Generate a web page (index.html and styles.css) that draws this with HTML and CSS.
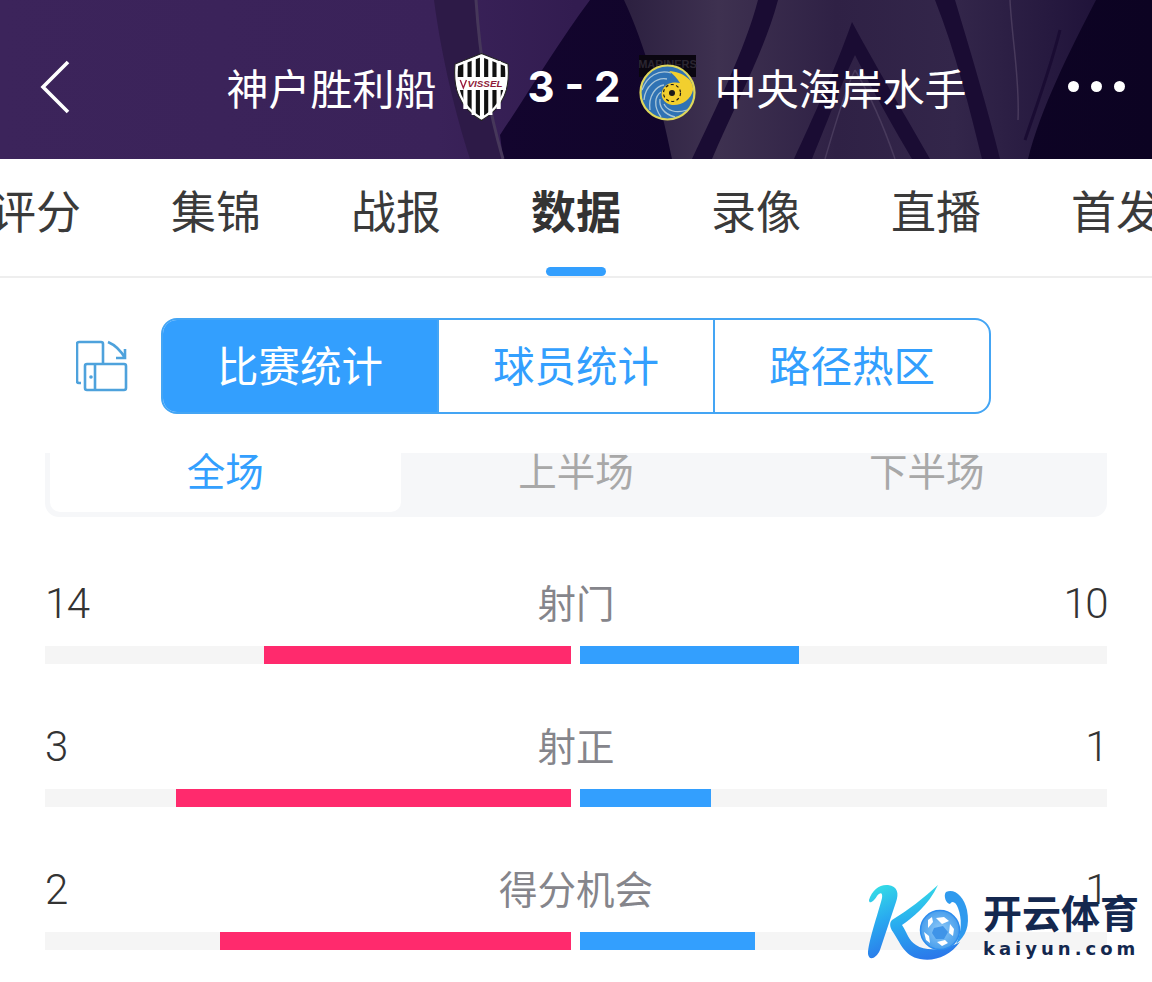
FILE: index.html
```html
<!DOCTYPE html>
<html lang="zh-CN">
<head>
<meta charset="utf-8">
<title>神户胜利船 3-2 中央海岸水手</title>
<link rel="stylesheet" href="styles.css">
</head>
<body>
<div class="page">
  <header class="match-header">
    <svg class="header-art" viewBox="0 0 1152 159" preserveAspectRatio="none" aria-hidden="true">
      <defs>
        <linearGradient id="base" x1="0" y1="0" x2="1" y2="0">
          <stop offset="0" stop-color="#3c245b"/><stop offset=".38" stop-color="#3a2259"/><stop offset=".5" stop-color="#321c50"/>
        </linearGradient>
        <linearGradient id="dark" x1="0" y1="0" x2="1" y2="0">
          <stop offset="0" stop-color="#13052e"/><stop offset="1" stop-color="#0c0322"/>
        </linearGradient>
        <linearGradient id="drape" x1="0" y1="0" x2="1" y2="0">
          <stop offset="0" stop-color="#2c2040"/><stop offset=".2" stop-color="#3e3150"/><stop offset=".45" stop-color="#2f2145"/><stop offset=".7" stop-color="#33264a"/><stop offset="1" stop-color="#20133a"/>
        </linearGradient>
      </defs>
      <rect width="1152" height="159" fill="url(#base)"/>
      <path d="M500 135C530 90 560 40 590 0H1152V159H503Z" fill="url(#dark)"/>
      <path d="M434 0C442 60 456 115 470 159H503C490 110 480 60 476 0Z" fill="#2d1a47"/>
      <path d="M476 0C480 60 490 115 503 159" stroke="#46375a" stroke-width="3" fill="none"/>
      <path d="M624 0H1096C1070 50 1040 110 1028 159H672C660 100 645 45 624 0Z" fill="url(#drape)"/>
      <path d="M758 0C745 50 715 110 692 159H712C735 105 765 50 778 0Z" fill="#1a0c33"/>
      <path d="M852 22C835 70 812 120 794 159H812C830 115 845 75 855 55C875 95 895 130 912 159H930C905 115 875 65 852 22Z" fill="#1a0c33"/>
      <path d="M935 0C955 50 970 110 982 159H1000C988 110 970 50 955 0Z" fill="#1a0c33"/>
      <path d="M855 70C845 90 835 125 825 159M855 70C870 95 885 130 895 159" stroke="#483a5c" stroke-width="1.500" fill="none"/>
      <path d="M1060 30C1050 70 1035 110 1025 140" stroke="#1a0c33" stroke-width="3" fill="none"/>
      <path d="M1010 0C1012 40 1020 80 1018 120" stroke="#483a5c" stroke-width="1.500" fill="none"/>
    </svg>
    <svg class="back-icon" viewBox="0 0 32 56" aria-label="返回"><path d="M29 3L4 28l25 25" fill="none" stroke="#fff" stroke-width="3.6"/></svg>
    <div class="match-title">
      <span class="team-name">神户胜利船</span>
      <svg class="crest crest-home" viewBox="1 0 53 68" preserveAspectRatio="none" aria-hidden="true">
        <path d="M27.500 .5L53 11C55 34 50 54 27.500 67.500C5 54 0 34 2 11Z" fill="#fff" stroke="#222" stroke-width="1"/>
        <path d="M27.500 4L50 13C52 34 47 52 27.500 64C8 52 3 34 5 13Z" fill="#111"/>
        <g fill="#fff"><rect x="10" y="8" width="4" height="48"/><rect x="18" y="6" width="4" height="56"/><rect x="26" y="4" width="4" height="60"/><rect x="34" y="6" width="4" height="56"/><rect x="42" y="8" width="4" height="48"/></g>
        <rect x="4" y="24" width="47" height="13" fill="#fff"/>
        <path d="M7 27l3 8 3-8" fill="none" stroke="#9c1b3c" stroke-width="1.300"/>
        <text class="crest-home-text" x="14" y="34.500">VISSEL</text>
      </svg>
      <span class="score">3 - 2</span>
      <svg class="crest crest-away" viewBox="0 0 58 70" aria-hidden="true">
        <rect x="0" y="1" width="57" height="22" fill="#0a0610"/>
        <text class="crest-away-text" x="28.500" y="14">MARINERS</text>
        <circle cx="28.500" cy="38.500" r="27" fill="#2f72b4" stroke="#dfd75a" stroke-width="2.200"/>
        <g fill="none" stroke="#a9c6d8" stroke-width="1.300">
          <path d="M3 36C8 22 20 15 32 19"/><path d="M5 46C6 32 18 23 28 25"/><path d="M11 56C9 42 17 32 25 31"/><path d="M22 63C14 52 16 42 22 38"/><path d="M36 63C24 60 20 52 21 45"/><path d="M48 56C36 60 28 56 25 50"/>
        </g>
        <path d="M30 17C44 18 55 26 54 36C52 46 42 52 33 51C25 50 20 42 24 35C28 28 36 28 41 29C38 24 34 20 30 17Z" fill="#f2cf2e"/>
        <circle cx="33" cy="39" r="8.500" fill="#f2cf2e" stroke="#1a1a1a" stroke-width="1.200" stroke-dasharray="3 2.500"/>
        <circle cx="33" cy="39" r="3" fill="#1a1a1a"/>
      </svg>
      <span class="team-name">中央海岸水手</span>
    </div>
    <div class="more-icon" aria-label="更多"><i></i><i></i><i></i></div>
  </header>

  <nav class="tabs">
    <span class="tab">评分</span>
    <span class="tab">集锦</span>
    <span class="tab">战报</span>
    <span class="tab tab-active">数据</span>
    <span class="tab">录像</span>
    <span class="tab">直播</span>
    <span class="tab">首发</span>
  </nav>

  <section class="switcher">
    <svg class="rotate-icon" viewBox="0 0 52 52" aria-hidden="true">
      <path d="M5 43H3a2 2 0 0 1-2-2V4a2 2 0 0 1 2-2h22a2 2 0 0 1 2 2v19" fill="none" stroke="#4ea2dc" stroke-width="2.600"/>
      <rect x="9" y="24" width="41" height="26" rx="2" fill="none" stroke="#4ea2dc" stroke-width="2.600"/>
      <path d="M19 24v26" stroke="#4ea2dc" stroke-width="2.600"/>
      <circle cx="15" cy="37" r="1.800" fill="#4ea2dc"/>
      <path d="M32 2c7 3 13 9 17 16M49 9v9h-9" fill="none" stroke="#4ea2dc" stroke-width="2.600"/>
    </svg>
    <div class="segments">
      <span class="segment segment-active">比赛统计</span>
      <span class="segment">球员统计</span>
      <span class="segment">路径热区</span>
    </div>
  </section>

  <div class="period-tabs">
    <span class="period period-active">全场</span>
    <span class="period">上半场</span>
    <span class="period">下半场</span>
  </div>

  <section class="stats">
    <div class="stat">
      <div class="stat-head"><span class="stat-num">14</span><span class="stat-label">射门</span><span class="stat-num">10</span></div>
      <div class="bars">
        <div class="track track-left"><div class="fill fill-home" style="width:58.33%"></div></div>
        <div class="track"><div class="fill fill-away" style="width:41.6%"></div></div>
      </div>
    </div>
    <div class="stat">
      <div class="stat-head"><span class="stat-num">3</span><span class="stat-label">射正</span><span class="stat-num">1</span></div>
      <div class="bars">
        <div class="track track-left"><div class="fill fill-home" style="width:75.1%"></div></div>
        <div class="track"><div class="fill fill-away" style="width:24.9%"></div></div>
      </div>
    </div>
    <div class="stat">
      <div class="stat-head"><span class="stat-num">2</span><span class="stat-label">得分机会</span><span class="stat-num">1</span></div>
      <div class="bars">
        <div class="track track-left"><div class="fill fill-home" style="width:66.67%"></div></div>
        <div class="track"><div class="fill fill-away" style="width:33.2%"></div></div>
      </div>
    </div>
  </section>

  <div class="watermark">
    <svg class="wm-logo" viewBox="0 0 104 80" aria-hidden="true">
      <defs>
        <linearGradient id="kgrad" x1="0.300" y1="0" x2="0.500" y2="1">
          <stop offset="0" stop-color="#35dfe6"/><stop offset=".5" stop-color="#29a9f0"/><stop offset="1" stop-color="#2b78ea"/>
        </linearGradient>
        <radialGradient id="ballgrad"><stop offset="0" stop-color="#8fcaf8"/><stop offset="1" stop-color="#4a9fec"/></radialGradient>
      </defs>
      <path d="M3 18C6 8 14 2 22 3C32 4 33 12 30 20L14 68C10 77 3 79 2 72C2 60 12 32 16 16C17 10 14 10 11 14C8 19 3 23 3 18Z" fill="url(#kgrad)"/>
      <path d="M72 3C62 24 46 36 36 43C42 52 42 58 50 63C60 70 80 68 94 60C84 74 68 80 54 77C38 74 34 60 27 50C24 46 23 41 26 38C42 28 58 16 72 3Z" fill="url(#kgrad)"/>
      <path d="M80 10C88 6 98 14 101 28C104 44 100 54 90 62C96 50 96 36 92 26C90 20 86 18 84 22C80 22 77 13 80 10Z" fill="#2f9aee"/>
      <circle cx="74" cy="48" r="19.500" fill="url(#ballgrad)" stroke="#2c8cee" stroke-width="1.500"/>
      <g fill="#fff">
        <path d="M70 36l8-1 5 4-7 3ZM62 38l4-3 1 5-5 6ZM58 50l5 4 1 7-4-3ZM84 42l4 5-1 7-4-3ZM71 60l8-2 3 3-6 3Z"/>
      </g>
      <path d="M68 46l9-2 5 6-4 7h-8l-4-6Z" fill="#3f94e8"/>
    </svg>
    <div class="wm-text">
      <div class="wm-cn">开云体育</div>
      <div class="wm-en">kaiyun.com</div>
    </div>
  </div>
</div>
</body>
</html>
```

FILE: styles.css
```css
* { box-sizing: border-box; }
html, body { margin: 0; padding: 0; background: #fff; }
body { font-family: "Noto Sans CJK SC", "Noto Sans", sans-serif; }
.page { position: relative; width: 1152px; height: 982px; overflow: hidden; background: #fff; }

.match-header {
  position: relative;
  height: 159px;
  display: flex;
  align-items: center;
  padding: 14px 27px 0 39px;
  background: #3b2359;
  color: #fff;
  overflow: hidden;
}
.header-art { position: absolute; inset: 0; width: 100%; height: 100%; }
.back-icon { position: relative; width: 32px; height: 56px; flex: none; }
.match-title {
  position: relative;
  flex: 1;
  display: flex;
  align-items: center;
  justify-content: center;
  margin-left: 54px;
}
.team-name { font-size: 42px; line-height: 56px; font-weight: 400; white-space: nowrap; }
.crest { display: block; flex: none; }
.crest-home { width: 55px; height: 68px; margin: 0 18px; }
.crest-away { width: 58px; height: 70px; margin: 4px 18px 0 18px; }
.crest-home-text { font: italic 700 9.500px "Liberation Sans", sans-serif; fill: #8e1a38; }
.crest-away-text { font: 700 11px "Liberation Sans", sans-serif; fill: #2a2530; text-anchor: middle; }
.score { font-family: "Inter", "Roboto", sans-serif; font-size: 42px; font-weight: 700; line-height: 56px; white-space: pre; }
.more-icon { position: relative; display: flex; gap: 12px; flex: none; }
.more-icon i { display: block; width: 11px; height: 11px; border-radius: 50%; background: #fff; }

.tabs {
  display: flex;
  justify-content: center;
  height: 119px;
  border-bottom: 2px solid #eeeeee;
}
.tab {
  position: relative;
  flex: none;
  width: 180px;
  text-align: center;
  font-size: 45px;
  line-height: 102px;
  color: #3a3a3a;
}
.tab-active { font-weight: 700; color: #333; }
.tab-active::after {
  content: "";
  position: absolute;
  left: 60px;
  bottom: 0;
  width: 60px;
  height: 9px;
  border-radius: 5px;
  background: #339ffe;
}

.switcher {
  display: flex;
  align-items: center;
  margin-top: 40px;
  padding-left: 76px;
}
.rotate-icon { width: 52px; height: 52px; flex: none; }
.segments {
  display: flex;
  width: 830px;
  height: 96px;
  margin-left: 33px;
  border: 2px solid #44a5f4;
  border-radius: 16px;
  overflow: hidden;
}
.segment {
  flex: 1;
  text-align: center;
  font-size: 41.500px;
  line-height: 88px;
  color: #339ffe;
  border-left: 2px solid #44a5f4;
}
.segment:first-child { border-left: 0; }
.segment-active { background: #339ffe; color: #fff; }

.period-tabs {
  display: flex;
  margin: 39px 45px 0;
  height: 64px;
  padding: 0 5px 5px;
  background: #f6f7f9;
  border-radius: 0 0 14px 14px;
  overflow: hidden;
}
.period {
  flex: 1;
  text-align: center;
  font-size: 38.500px;
  line-height: 32px;
  color: #a8a8a8;
}
.period-active { background: #fff; color: #339ffe; border-radius: 0 0 10px 10px; }

.stats { margin: 62px 45px 0; display: flex; flex-direction: column; gap: 58px; }
.stat { display: flex; flex-direction: column; gap: 23px; }
.stat-head { display: flex; justify-content: space-between; align-items: center; height: 44px; position: relative; }
.stat-num { font-family: "Roboto", sans-serif; font-weight: 300; font-size: 42px; color: #333; line-height: 44px; letter-spacing: -1.500px; margin-top: 6px; }
.stat-label { position: absolute; left: 0; right: 0; text-align: center; font-size: 38.500px; line-height: 44px; color: #85858b; }
.bars { display: flex; gap: 9px; height: 18px; }
.track { flex: 1; background: #f5f5f5; display: flex; }
.track-left { flex: 0 0 526px; justify-content: flex-end; }
.fill { height: 100%; }
.fill-home { background: #ff2a6d; }
.fill-away { background: #339ffe; }

.watermark {
  position: absolute;
  left: 866px;
  top: 882px;
  display: flex;
  gap: 13px;
  align-items: flex-start;
}
.wm-logo { width: 104px; height: 80px; flex: none; }
.wm-text { color: #14284f; width: 156px; margin-top: 4px; }
.wm-cn { font-size: 39px; font-weight: 700; line-height: 50px; white-space: nowrap; }
.wm-en { font-family: "DejaVu Sans", sans-serif; font-weight: 700; font-size: 18px; line-height: 24px; letter-spacing: 4px; white-space: nowrap; margin-top: 1px; }
```
